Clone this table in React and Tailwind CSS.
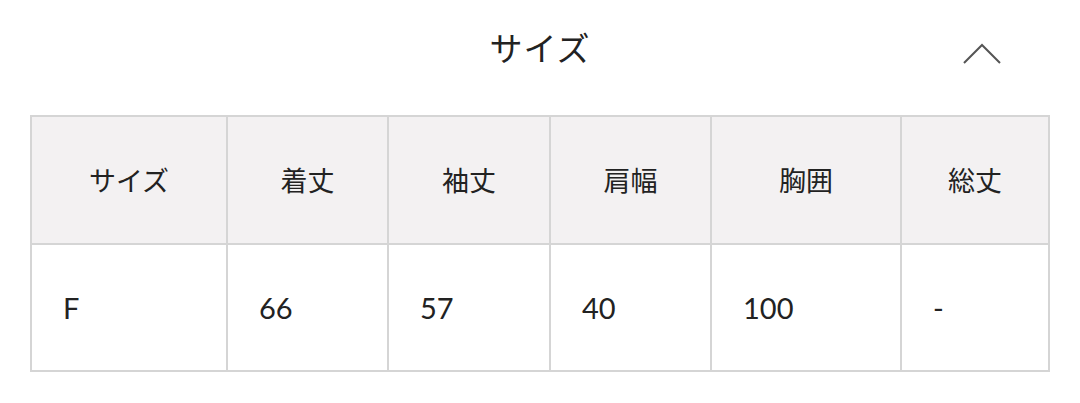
const jp = { fontFamily: '"Noto Sans CJK JP", "Noto Sans", sans-serif' }
const num = { fontFamily: 'Lato, "Noto Sans CJK JP", sans-serif' }

const columns = [
  { label: 'サイズ', value: 'F', width: 'w-[196px]' },
  { label: '着丈', value: '66', width: 'w-[161px]' },
  { label: '袖丈', value: '57', width: 'w-[162px]' },
  { label: '肩幅', value: '40', width: 'w-[161px]' },
  { label: '胸囲', value: '100', width: 'w-[190px]' },
  { label: '総丈', value: '-', width: 'w-[148px]' },
]

export default function App() {
  return (
    <div className="h-[403px] w-[1080px] overflow-hidden bg-white text-[#222]">
      <div className="grid h-[92px] grid-cols-[1fr_auto_1fr] items-center pt-[2px]">
        <div />
        <h2 style={jp} className="text-[33px] leading-none tracking-[1px]">
          サイズ
        </h2>
        <div className="flex justify-end pr-[78px] pt-[14px]">
          <svg width="40" height="24" viewBox="0 0 40 24" fill="none">
            <polyline points="2,21 20,3 38,21" stroke="#555" strokeWidth="2" />
          </svg>
        </div>
      </div>

      <div className="pl-[30px] pr-[31px] pt-[23px]">
        <table className="w-full table-fixed border-collapse border-2 border-[#d5d5d5]">
          <colgroup>
            {columns.map((c) => (
              <col key={c.label} className={c.width} />
            ))}
          </colgroup>
          <thead>
            <tr className="h-[128px] bg-[#f3f1f2]">
              {columns.map((c) => (
                <th
                  key={c.label}
                  style={jp}
                  className="border-2 border-[#d5d5d5] text-center text-[27px] font-normal"
                >
                  {c.label}
                </th>
              ))}
            </tr>
          </thead>
          <tbody>
            <tr className="h-[127px]">
              {columns.map((c) => (
                <td
                  key={c.label}
                  style={num}
                  className="border-2 border-[#d5d5d5] pl-[31px] text-left text-[29px]"
                >
                  {c.value}
                </td>
              ))}
            </tr>
          </tbody>
        </table>
      </div>
    </div>
  )
}
